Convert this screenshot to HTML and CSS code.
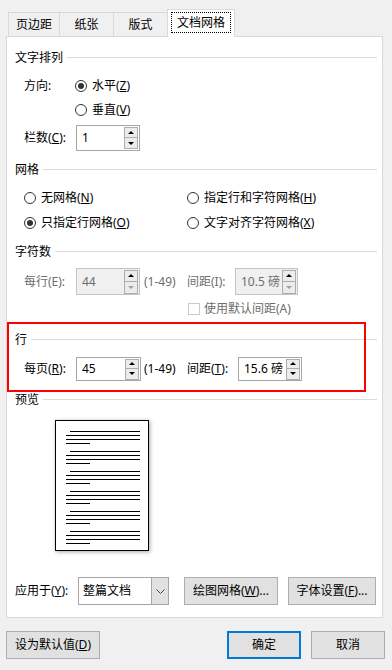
FILE: index.html
```html
<!DOCTYPE html>
<html lang="zh-CN">
<head>
<meta charset="utf-8">
<title>页面设置</title>
<link rel="stylesheet" href="styles.css">
</head>
<body>
<div class="tabs">
  <div class="tab w51">页边距</div>
  <div class="tab w54">纸张</div>
  <div class="tab w54">版式</div>
  <div class="tab active"><span class="focus">文档网格</span></div>
</div>
<div class="panel">
  <div class="legend"><span>文字排列</span><i class="rule"></i></div>
  <div class="row r-dir">
    <span class="lbl w51">方向:</span>
    <span class="radio on"></span><span class="rtext">水平(<u>Z</u>)</span>
  </div>
  <div class="row r-vert">
    <span class="radio"></span><span class="rtext">垂直(<u>V</u>)</span>
  </div>
  <div class="row r-cols">
    <span class="lbl w52">栏数(<u>C</u>):</span>
    <div class="spin s64 h26"><span class="val">1</span><span class="btns"><span class="sb"><i class="up"></i></span><span class="sb"><i class="dn"></i></span></span></div>
  </div>

  <div class="legend g1"><span>网格</span><i class="rule"></i></div>
  <div class="row r-g1">
    <span class="col"><span class="radio"></span><span class="rtext">无网格(<u>N</u>)</span></span>
    <span class="col"><span class="radio"></span><span class="rtext">指定行和字符网格(<u>H</u>)</span></span>
  </div>
  <div class="row r-g2">
    <span class="col"><span class="radio on"></span><span class="rtext">只指定行网格(<u>O</u>)</span></span>
    <span class="col"><span class="radio"></span><span class="rtext">文字对齐字符网格(<u>X</u>)</span></span>
  </div>

  <div class="legend g2"><span>字符数</span><i class="rule"></i></div>
  <div class="row r-chars dis">
    <span class="lbl w52">每行(E):</span>
    <div class="spin s64 h27 disabled"><span class="val">44</span><span class="btns"><span class="sb"><i class="up"></i></span><span class="sb"><i class="dn grey"></i></span></span></div>
    <span class="range">(1-49)</span>
    <span class="lbl w48">间距(I):</span>
    <div class="spin s63 h27 disabled"><span class="val">10.5 磅</span><span class="btns"><span class="sb"><i class="up"></i></span><span class="sb"><i class="dn grey"></i></span></span></div>
  </div>
  <div class="row r-check dis">
    <span class="check"></span><span class="rtext">使用默认间距(A)</span>
  </div>

  <div class="legend g3"><span>行</span><i class="rule"></i></div>
  <div class="row r-lines">
    <span class="lbl w52">每页(<u>R</u>):</span>
    <div class="spin s65 h24"><span class="val">45</span><span class="btns"><span class="sb"><i class="up"></i></span><span class="sb"><i class="dn"></i></span></span></div>
    <span class="range r3">(1-49)</span>
    <span class="lbl w51">间距(<u>T</u>):</span>
    <div class="spin s64 h24"><span class="val">15.6 磅</span><span class="btns"><span class="sb"><i class="up"></i></span><span class="sb"><i class="dn"></i></span></span></div>
  </div>

  <div class="legend g4"><span>预览</span><i class="rule"></i></div>
  <div class="preview">
    <svg class="page" width="94" height="131" viewBox="0 0 94 131">
      <rect x="0.5" y="0.5" width="93" height="130" fill="#fff" stroke="#000"/>
      <g stroke="#000" stroke-width="1">
        <g id="grp">
          <line x1="15" y1="11.5" x2="85" y2="11.5"/>
          <line x1="11" y1="15.5" x2="85" y2="15.5"/>
          <line x1="11" y1="19.5" x2="85" y2="19.5"/>
          <line x1="11" y1="23.5" x2="35" y2="23.5"/>
        </g>
        <use href="#grp" y="20"/>
        <use href="#grp" y="40"/>
        <use href="#grp" y="60"/>
        <use href="#grp" y="80"/>
        <use href="#grp" y="100"/>
      </g>
    </svg>
  </div>

  <div class="row r-apply">
    <span class="lbl w63">应用于(<u>Y</u>):</span>
    <div class="select"><span class="val">整篇文档</span><span class="drop"><svg width="9" height="5" viewBox="0 0 9 5"><path d="M0.5 0.5 L4.5 4.5 L8.5 0.5" fill="none" stroke="#444" stroke-width="1"/></svg></span></div>
    <button class="btn b-grid">绘图网格(<u>W</u>)...</button>
    <button class="btn b-font">字体设置(<u>F</u>)...</button>
  </div>
</div>
<div class="footer">
  <button class="btn b-def">设为默认值(<u>D</u>)</button>
  <span class="spacer"></span>
  <button class="btn b-ok">确定</button>
  <button class="btn b-cancel">取消</button>
</div>
<div class="highlight"></div>
</body>
</html>
```

FILE: styles.css
```css
* { box-sizing: border-box; }
html, body { margin: 0; padding: 0; }
body {
  width: 392px;
  height: 670px;
  background: #f0f0f0;
  font-family: "Noto Sans", "Noto Sans CJK SC", sans-serif;
  font-size: 12px;
  line-height: 16px;
  color: #000;
  padding-top: 9px;
  position: relative;
  overflow: hidden;
}
u { text-decoration: underline; text-underline-offset: 1px; }

/* tabs */
.tabs {
  display: flex;
  align-items: flex-end;
  margin-left: 8px;
  height: 27px;
  position: relative;
  z-index: 2;
}
.tab {
  height: 24px;
  border: 1px solid #d9d9d9;
  border-bottom: none;
  border-right: none;
  display: flex;
  align-items: center;
  justify-content: center;
  background: #f0f0f0;
  padding-top: 1px;
}
.tab.w51 { width: 51px; }
.tab.w54 { width: 54px; }
.tab.active {
  width: 68px;
  height: 28px;
  margin-bottom: -1px;
  background: #fff;
  border-right: 1px solid #d9d9d9;
  padding-top: 0;
  padding-bottom: 2px;
}
.focus {
  display: block;
  width: 60px;
  height: 21px;
  line-height: 19px;
  text-align: center;
  border: 1px dotted #000;
}

/* panel */
.panel {
  margin-left: 6px;
  width: 377px;
  height: 582px;
  background: #fff;
  border: 1px solid #d9d9d9;
  padding-top: 13px;
}
.legend {
  height: 16px;
  display: flex;
  align-items: center;
  padding-left: 8px;
  padding-right: 5px;
}
.legend .rule {
  flex: 1;
  height: 1px;
  background: #dcdcdc;
  margin-left: 4px;
  margin-top: -2px;
}
.g1 { margin-top: 11px; }
.g2 { margin-top: 11px; }
.g3 { margin-top: 15px; }
.g4 { margin-top: 11px; }

.row {
  display: flex;
  align-items: center;
  padding-left: 17px;
  height: 20px;
}
.r-dir { margin-top: 10px; }
.r-vert { margin-top: 4px; padding-left: 68px; }
.r-cols { margin-top: 5px; height: 26px; }
.r-g1 { margin-top: 10px; }
.r-g2 { margin-top: 5px; }
.r-chars { margin-top: 8px; height: 27px; }
.r-check { margin-top: 6px; height: 16px; padding-left: 181px; }
.r-lines { margin-top: 9px; height: 24px; }
.r-apply { margin-top: 26px; height: 28px; padding-left: 8px; }

.dis { color: #6d6d6d; }

.lbl { flex: none; }
.w48 { width: 48px; }
.w51 { width: 51px; }
.w52 { width: 52px; }
.w63 { width: 63px; }

.col { display: flex; align-items: center; width: 163px; }

.radio {
  flex: none;
  width: 12px;
  height: 12px;
  border: 1px solid #333;
  border-radius: 50%;
  background: #fff;
  position: relative;
}
.radio.on::after {
  content: "";
  position: absolute;
  left: 2px;
  top: 2px;
  width: 6px;
  height: 6px;
  border-radius: 50%;
  background: #333;
}
.rtext { margin-left: 5px; }
.r-check .rtext { margin-left: 4px; }
.check {
  flex: none;
  width: 12px;
  height: 12px;
  border: 1px solid #cccccc;
  background: #fff;
}

/* spin boxes */
.spin {
  flex: none;
  display: flex;
  align-items: center;
  border: 1px solid #a6a6a6;
  background: #fff;
}
.spin.disabled { background: #f0f0f0; border-color: #c4c4c4; }
.s63 { width: 63px; }
.s64 { width: 64px; }
.s65 { width: 65px; }
.h24 { height: 24px; }
.h26 { height: 26px; }
.h27 { height: 27px; }
.spin .val { flex: 1; padding-left: 5px; white-space: nowrap; }
.btns {
  display: flex;
  flex-direction: column;
  gap: 0;
  margin-right: 1px;
}
.sb {
  width: 14px;
  height: 11px;
  border: 1px solid #adadad;
  background: #ececec;
  display: flex;
  align-items: center;
  justify-content: center;
}
.h24 .sb { height: 10px; }
.sb + .sb { border-top: none; height: 11px; }
.h27 .sb { height: 12px; }
.up, .dn { width: 0; height: 0; border-left: 3px solid transparent; border-right: 3px solid transparent; }
.up { border-bottom: 3px solid #000; }
.dn { border-top: 3px solid #000; }
.dn.grey { border-top-color: #a0a0a0; }

.range { width: 43px; margin-left: 4px; flex: none; }
.range.r3 { margin-left: 3px; }

/* preview */
.preview {
  margin-top: 12px;
  padding-left: 48px;
  height: 131px;
}
.page {
  display: block;
  box-shadow: 1px 1px 4px rgba(0,0,0,0.35);
}

/* select + buttons */
.select {
  flex: none;
  width: 91px;
  height: 28px;
  border: 1px solid #a6a6a6;
  background: #fff;
  display: flex;
}
.select .val { flex: 1; padding-left: 4px; line-height: 26px; }
.select .drop {
  width: 17px;
  background: #e1e1e1;
  border-left: 1px solid #a6a6a6;
  display: flex;
  align-items: center;
  justify-content: center;
}
.btn {
  font: inherit;
  color: #000;
  height: 28px;
  background: #e1e1e1;
  border: 1px solid #adadad;
  padding: 0;
  flex: none;
}
.b-grid { width: 94px; margin-left: 15px; }
.b-font { width: 88px; margin-left: 10px; }

.footer {
  display: flex;
  margin-top: 13px;
  padding-left: 6px;
  padding-right: 7px;
  height: 28px;
}
.spacer { flex: 1; }
.b-def { width: 94px; }
.b-ok { width: 74px; border: 2px solid #0078d7; }
.b-cancel { width: 74px; margin-left: 10px; }

.highlight {
  position: absolute;
  left: 7px;
  top: 322px;
  width: 359px;
  height: 70px;
  border: 2px solid #ff0000;
  pointer-events: none;
}
```
